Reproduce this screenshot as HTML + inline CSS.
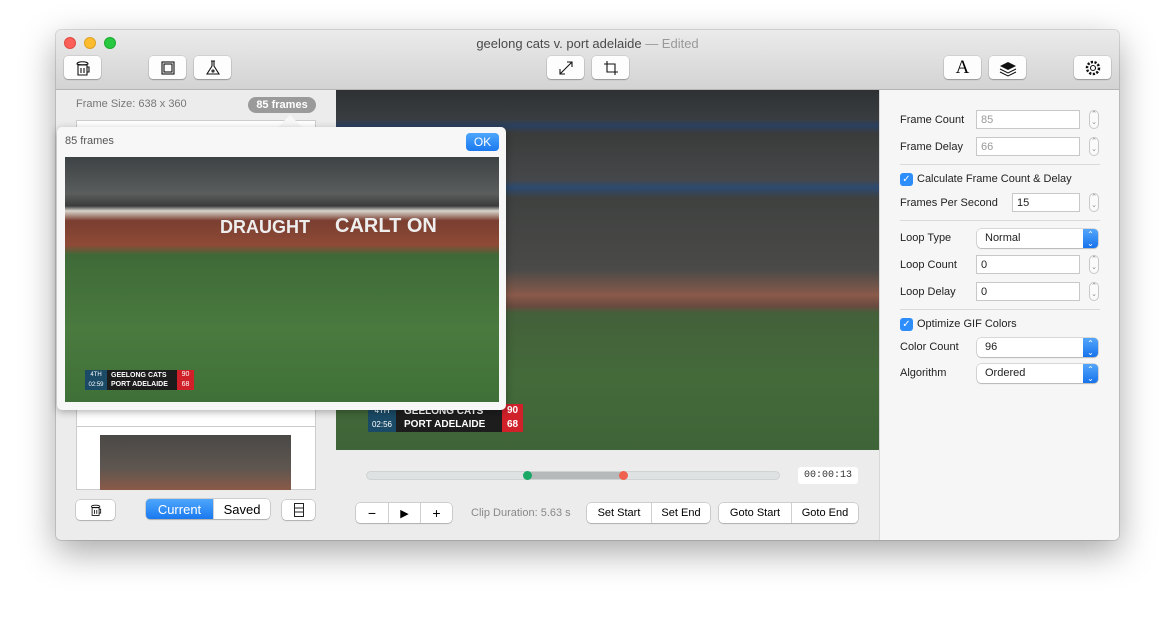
<!DOCTYPE html>
<html><head><meta charset="utf-8"><style>
*{margin:0;padding:0;box-sizing:border-box}
body{width:1175px;height:620px;background:#fff;font-family:"Liberation Sans",sans-serif;position:relative;overflow:hidden}
.win{position:absolute;left:56px;top:30px;width:1063px;height:510px;background:#ececec;border-radius:5px;box-shadow:0 12px 35px rgba(0,0,0,.35),0 0 0 1px rgba(0,0,0,.12);overflow:hidden}
.tb{position:absolute;left:0;top:0;width:100%;height:60px;background:linear-gradient(#ebebeb,#d3d3d3);border-bottom:1px solid #b5b5b5}
.dot{position:absolute;top:7px;width:12px;height:12px;border-radius:50%}
.title{position:absolute;top:6px;left:0;width:100%;text-align:center;font-size:13px;color:#4a4a4a}
.title span{color:#999}
.btn{position:absolute;top:26px;height:23px;background:#fdfdfd;border-radius:4px;box-shadow:0 1px 1px rgba(0,0,0,.25),0 0 0 .5px rgba(0,0,0,.15);display:flex;align-items:center;justify-content:center}
.abs{position:absolute}
.right{position:absolute;left:823px;top:60px;width:240px;height:450px;background:#f6f6f6;border-left:1px solid #d8d8d8}
.lab{position:absolute;font-size:11px;color:#222}
.fld{position:absolute;height:19px;background:#fff;border:1px solid #c8c8c8;font-size:11px;padding:3px 4px;color:#222}
.step{position:absolute;width:10px;height:19px;border:1px solid #c8c8c8;border-radius:5px;background:#fafafa;font-size:7px;line-height:8px;text-align:center;color:#888}
.sel{position:absolute;height:19px;background:#fff;border-radius:4px;box-shadow:0 0 0 .5px rgba(0,0,0,.25),0 1px 1px rgba(0,0,0,.15);font-size:11px;padding:3px 8px;color:#222}
.sel i{position:absolute;right:0;top:0;width:15px;height:19px;background:linear-gradient(#54a6fb,#1673ec);border-radius:0 4px 4px 0;color:#fff;font-style:normal;font-size:8px;text-align:center;line-height:9px;padding-top:1px}
.hr{position:absolute;left:20px;width:200px;height:1px;background:#dadada}
.chk{position:absolute;width:13px;height:13px;border-radius:3px;background:#2c8dfb;color:#fff;font-size:10px;line-height:13px;text-align:center}
.sb{position:absolute;height:20px;background:#fff;border-radius:4px;box-shadow:0 0 0 .5px rgba(0,0,0,.25),0 1px 1px rgba(0,0,0,.15);font-size:11px;display:flex}
.sb div{display:flex;align-items:center;justify-content:center;border-left:1px solid #d0d0d0;height:100%}
.sb div:first-child{border-left:none}
.video{position:absolute;left:280px;top:60px;width:543px;height:360px;background:linear-gradient(#2e3133 0%,#3a3d40 8%,#2a4060 10%,#3a3c3b 12%,#45474a 25%,#2c4a70 27%,#3f4140 30%,#4a4a48 50%,#8a5a4a 57%,#6a4a40 60%,#43603a 62%,#446a3a 80%,#3f6438 100%)}
</style></head><body>
<div class="win">
 <div class="tb">
  <div class="dot" style="left:8px;background:#fc5f57;border:.5px solid #de4a42"></div>
  <div class="dot" style="left:28px;background:#fdbc2e;border:.5px solid #dea123"></div>
  <div class="dot" style="left:48px;background:#28c840;border:.5px solid #1aab2c"></div>
  <div class="title">geelong cats v. port adelaide <span>— Edited</span></div>
  <div class="btn" style="left:8px;width:37px"><svg width="18" height="18" viewBox="0 0 18 18" fill="none" stroke="#111" stroke-width="1.1"><path d="M4 6h9v10H4zM13 8h2v5h-2M3 5c0-3 11-3 11 0-1 1-11 1-11 0M7 9v5M10 9v5"/></svg></div>
  <div class="btn" style="left:93px;width:37px"><svg width="18" height="18" viewBox="0 0 18 18" fill="none" stroke="#111" stroke-width="1.1"><rect x="3" y="3" width="12" height="12"/><rect x="5" y="5" width="8" height="8"/></svg></div>
  <div class="btn" style="left:138px;width:37px"><svg width="18" height="18" viewBox="0 0 18 18" fill="none" stroke="#111" stroke-width="1.1"><path d="M7 2h4M8 2v5L3 15h12L10 7V2"/><circle cx="9" cy="12" r="1"/></svg></div>
  <div class="btn" style="left:491px;width:37px"><svg width="18" height="18" viewBox="0 0 18 18" fill="none" stroke="#111" stroke-width="1.1"><path d="M3 15L15 3M10 3h5v5M3 10v5h5"/></svg></div>
  <div class="btn" style="left:536px;width:37px"><svg width="18" height="18" viewBox="0 0 18 18" fill="none" stroke="#111" stroke-width="1.1"><path d="M5 2v11h11M2 5h11v11"/></svg></div>
  <div class="btn" style="left:888px;width:37px;font-size:19px;font-family:'Liberation Serif',serif">A</div>
  <div class="btn" style="left:933px;width:37px"><svg width="20" height="18" viewBox="0 0 20 18"><path d="M2 7l8-4 8 4-8 4z" fill="#111"/><path d="M2 10l8 4 8-4M2 13l8 4 8-4" fill="none" stroke="#111"/></svg></div>
  <div class="btn" style="left:1018px;width:37px"><svg width="18" height="18" viewBox="0 0 18 18" fill="none" stroke="#111" stroke-width="1.1"><circle cx="9" cy="9" r="2.5"/><circle cx="9" cy="9" r="6" stroke-dasharray="2.2 1.5" stroke-width="2.5"/></svg></div>
 </div>

 <div class="abs" style="left:20px;top:68px;font-size:11px;color:#777">Frame Size: 638 x 360</div>
 <div class="abs" style="left:192px;top:67px;width:68px;height:16px;border-radius:8px;background:#9a9a9a;color:#fff;font-size:11px;font-weight:bold;text-align:center;line-height:16px">85 frames</div>
 <div class="abs" style="left:20px;top:90px;width:240px;height:370px;background:#fff;border:1px solid #ccc"></div>
 <div class="abs" style="left:44px;top:405px;width:191px;height:55px;background:linear-gradient(#4a4846,#5e5650 60%,#8a5a48)"></div>
 <div class="abs" style="left:20px;top:396px;width:240px;height:1px;background:#ccc"></div>

 <div class="video">
  <div class="abs" style="left:32px;top:314px;width:155px;height:28px;background:#1d1d1d"></div>
  <div class="abs" style="left:32px;top:314px;width:28px;height:28px;background:#1a4a66;color:#fff;font-size:8px;text-align:center;line-height:14px">4TH<br>02:56</div>
  <div class="abs" style="left:68px;top:315px;color:#fff;font-size:10px;font-weight:bold;line-height:13px">GEELONG CATS<br>PORT ADELAIDE</div>
  <div class="abs" style="left:166px;top:314px;width:21px;height:28px;background:#d0202a;color:#fff;font-size:10px;font-weight:bold;text-align:center;line-height:14px">90<br>68</div>
 </div>

 <div class="right">
  <div class="lab" style="left:20px;top:24px">Frame Count</div>
  <div class="fld" style="left:96px;top:20px;width:104px;color:#999">85</div>
  <div class="step" style="left:209px;top:20px">⌃<br>⌄</div>
  <div class="lab" style="left:20px;top:51px">Frame Delay</div>
  <div class="fld" style="left:96px;top:47px;width:104px;color:#999">66</div>
  <div class="step" style="left:209px;top:47px">⌃<br>⌄</div>
  <div class="hr" style="top:74px"></div>
  <div class="chk" style="left:20px;top:83px">✓</div>
  <div class="lab" style="left:37px;top:83px">Calculate Frame Count &amp; Delay</div>
  <div class="lab" style="left:20px;top:107px">Frames Per Second</div>
  <div class="fld" style="left:132px;top:103px;width:68px">15</div>
  <div class="step" style="left:209px;top:103px">⌃<br>⌄</div>
  <div class="hr" style="top:130px"></div>
  <div class="lab" style="left:20px;top:142px">Loop Type</div>
  <div class="sel" style="left:97px;top:139px;width:121px">Normal<i>⌃<br>⌄</i></div>
  <div class="lab" style="left:20px;top:169px">Loop Count</div>
  <div class="fld" style="left:96px;top:165px;width:104px">0</div>
  <div class="step" style="left:209px;top:165px">⌃<br>⌄</div>
  <div class="lab" style="left:20px;top:196px">Loop Delay</div>
  <div class="fld" style="left:96px;top:192px;width:104px">0</div>
  <div class="step" style="left:209px;top:192px">⌃<br>⌄</div>
  <div class="hr" style="top:219px"></div>
  <div class="chk" style="left:20px;top:228px">✓</div>
  <div class="lab" style="left:37px;top:228px">Optimize GIF Colors</div>
  <div class="lab" style="left:20px;top:251px">Color Count</div>
  <div class="sel" style="left:97px;top:248px;width:121px">96<i>⌃<br>⌄</i></div>
  <div class="lab" style="left:20px;top:277px">Algorithm</div>
  <div class="sel" style="left:97px;top:274px;width:121px">Ordered<i>⌃<br>⌄</i></div>
 </div>

 <div class="abs" style="left:310px;top:441px;width:414px;height:9px;border-radius:5px;background:#dfe2e3;border:1px solid #d0d3d4"></div>
 <div class="abs" style="left:472px;top:442px;width:95px;height:7px;background:#b5b9ba"></div>
 <div class="abs" style="left:467px;top:441px;width:9px;height:9px;border-radius:50%;background:#19a866"></div>
 <div class="abs" style="left:563px;top:441px;width:9px;height:9px;border-radius:50%;background:#f0604e"></div>
 <div class="abs" style="left:742px;top:437px;width:60px;height:17px;background:#fff;border-radius:3px;font-family:'Liberation Mono',monospace;font-size:10px;text-align:center;line-height:17px;color:#333">00:00:13</div>

 <div class="sb" style="left:20px;top:470px;width:39px"><div style="width:39px"><svg width="14" height="16" viewBox="0 0 18 18" fill="none" stroke="#111" stroke-width="1.1"><path d="M4 6h9v10H4zM13 8h2v5h-2M3 5c0-3 11-3 11 0-1 1-11 1-11 0M7 9v5M10 9v5"/></svg></div></div>
 <div class="sb" style="left:90px;top:469px;width:124px;font-size:13px"><div style="width:67px;background:linear-gradient(#4ea6fc,#1a79f0);color:#fff;border-radius:4px 0 0 4px">Current</div><div style="width:57px">Saved</div></div>
 <div class="sb" style="left:226px;top:470px;width:33px"><div style="width:33px"><svg width="10" height="14"><rect x=".5" y=".5" width="9" height="13" fill="none" stroke="#222"/><path d="M1 5h8M1 9h8" stroke="#222"/></svg></div></div>

 <div class="sb" style="left:300px;top:473px;width:96px;font-size:14px"><div style="width:32px">−</div><div style="width:32px;font-size:11px">▶</div><div style="width:32px">+</div></div>
 <div class="abs" style="left:415px;top:477px;font-size:11px;color:#888">Clip Duration: 5.63 s</div>
 <div class="sb" style="left:531px;top:473px;width:123px"><div style="width:64px">Set Start</div><div style="width:59px">Set End</div></div>
 <div class="sb" style="left:663px;top:473px;width:139px"><div style="width:72px">Goto Start</div><div style="width:67px">Goto End</div></div>
</div>

<!-- popover -->
<div class="abs" style="left:278px;top:115px;width:0;height:0;border-left:12px solid transparent;border-right:12px solid transparent;border-bottom:12px solid #f7f7f7"></div>
<div class="abs" style="left:57px;top:127px;width:449px;height:283px;background:#f7f7f7;border-radius:5px;box-shadow:0 2px 8px rgba(0,0,0,.3)">
 <div class="abs" style="left:8px;top:8px;font-size:11px;color:#555">85 frames</div>
 <div class="abs" style="left:409px;top:6px;width:33px;height:18px;border-radius:4px;background:linear-gradient(#4ea6fc,#1a79f0);color:#fff;font-size:12px;text-align:center;line-height:18px">OK</div>
 <div class="abs" style="left:8px;top:30px;width:434px;height:245px;background:linear-gradient(#3d4245 0%,#5a5d5c 15%,#3a3c3b 20%,#d8d4cc 22%,#7a3e30 26%,#8e4a36 36%,#3f6a38 40%,#4a7a3e 70%,#3f7037 100%)">
  <div class="abs" style="left:20px;top:213px;width:109px;height:20px;background:#1c1c1c"></div>
  <div class="abs" style="left:20px;top:213px;width:22px;height:20px;background:#1a4a66;color:#fff;font-size:6px;text-align:center;line-height:10px">4TH<br>02:59</div>
  <div class="abs" style="left:46px;top:214px;color:#fff;font-size:7px;font-weight:bold;line-height:9px">GEELONG CATS<br>PORT ADELAIDE</div>
  <div class="abs" style="left:112px;top:213px;width:17px;height:20px;background:#d0202a;color:#fff;font-size:7px;text-align:center;line-height:10px">90<br>68</div>
  <div class="abs" style="left:270px;top:58px;color:#eee;font-size:20px;font-weight:bold">CARLT ON</div>
  <div class="abs" style="left:155px;top:60px;color:#eee;font-size:18px;font-weight:bold">DRAUGHT</div>
 </div>
</div>
</body></html>
